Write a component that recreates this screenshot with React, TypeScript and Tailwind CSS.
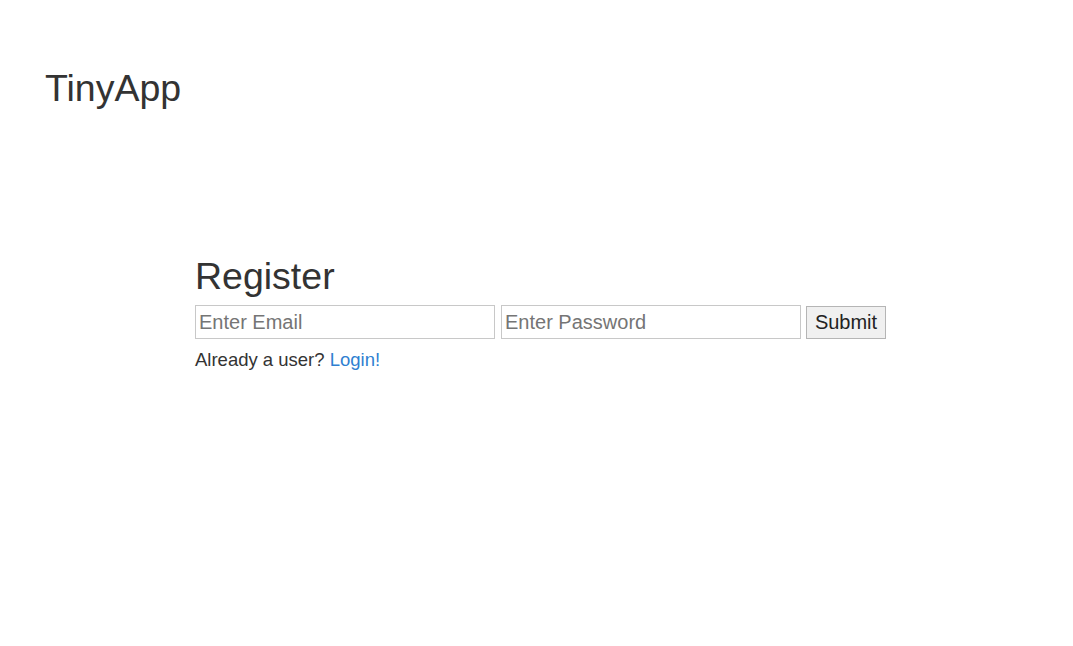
export default function App() {
  return (
    <main className="min-h-screen bg-white text-[#333333] font-['Liberation_Sans',Arial,sans-serif]">
      <header className="px-[45px] pt-[68px]">
        <h1 className="text-[37.5px] leading-[40px]">TinyApp</h1>
      </header>

      <section className="pl-[195px] pt-[148px]">
        <h2 className="text-[37.5px] leading-[40px]">Register</h2>
        <form className="mt-[9px] flex items-center gap-[6px]" onSubmit={(e) => e.preventDefault()}>
          <input
            type="email"
            placeholder="Enter Email"
            className="h-[34px] w-[300px] border border-[#c8c8c8] px-[3px] text-[20px] placeholder:text-[#757575] outline-none"
          />
          <input
            type="password"
            placeholder="Enter Password"
            className="h-[34px] w-[300px] border border-[#c8c8c8] px-[3px] text-[20px] placeholder:text-[#757575] outline-none"
          />
          <button
            type="submit"
            className="-ml-px h-[33px] w-[80px] border border-[#b5b5b5] bg-[#f0f0f0] text-[20px] text-[#222]"
          >
            Submit
          </button>
        </form>
        <p className="mt-[9px] text-[18.5px] leading-[24px]">
          Already a user?{" "}
          <a href="#" className="text-[#2f7fd1]">
            Login!
          </a>
        </p>
      </section>
    </main>
  );
}
